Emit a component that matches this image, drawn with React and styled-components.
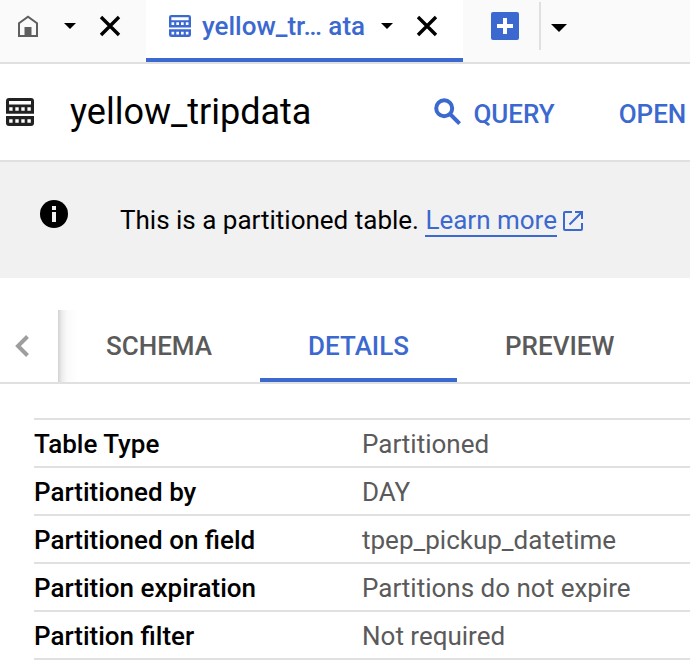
import React from "react";
import styled, { createGlobalStyle } from "styled-components";

const BLUE = "#3b69d0";
const LINE = "#e0e0e0";
const GREY = "#5a5a5a";

const GlobalStyle = createGlobalStyle`
  *, *::before, *::after { box-sizing: border-box; }
  body {
    margin: 0;
    background: #fff;
    color: #000;
    font: 400 26px/32px Roboto, "Noto Sans", sans-serif;
  }
`;

const Page = styled.div`
  overflow: hidden;
`;

const Button = styled.button`
  display: flex;
  align-items: center;
  flex: none;
  margin: 0;
  padding: 0;
  border: 0;
  background: none;
  color: inherit;
  font: inherit;
  white-space: nowrap;
  cursor: pointer;
`;

const Icon = styled.svg`
  display: block;
  flex: none;
`;

const EditorTabs = styled.nav`
  display: flex;
  height: 64px;
  background: #fafafa;
  border-bottom: 2px solid ${LINE};
`;

const EditorTab = styled.div`
  display: flex;
  align-items: center;
  flex: none;
  padding: ${(p) => (p.$active ? "0 25px 6px 23px" : "0 25px 6px 16px")};
  border-bottom: 4px solid ${(p) => (p.$active ? BLUE : "transparent")};
  background: ${(p) => (p.$active ? "#fff" : "transparent")};
`;

const TabLabel = styled(Button)`
  gap: 11px;
  color: ${BLUE};
  font-weight: 500;
`;

const MenuButton = styled(Button)`
  margin: 0 23px 0 ${(p) => (p.$wide ? "24px" : "16px")};
`;

const NewTab = styled.div`
  display: flex;
  align-items: center;
  flex: none;
  height: 48px;
  margin: 2px 10px 0 28px;
  padding-right: 20px;
  border-right: 2px solid ${LINE};
`;

const TabList = styled(Button)`
  height: 56px;
`;

const Header = styled.header`
  display: flex;
  align-items: center;
  height: 98px;
  padding-left: 6px;
  border-bottom: 2px solid ${LINE};
  color: #222;
`;

const Title = styled.h1`
  flex: none;
  margin: 0 123px 0 36px;
  color: #000;
  font-size: 36px;
  font-weight: 400;
  line-height: 44px;
`;

const Actions = styled.div`
  display: flex;
  gap: 64px;
  padding-top: 4px;
`;

const Action = styled(Button)`
  gap: 11px;
  color: ${BLUE};
  font-weight: 500;
`;

const Banner = styled.section`
  display: flex;
  align-items: flex-start;
  gap: 52px;
  padding: 38px 40px 36px;
  background: #f1f1f1;
`;

const BannerText = styled.p`
  margin: 4px 0 5px;
`;

const LearnMore = styled.a`
  display: inline-flex;
  align-items: center;
  gap: 6px;
  height: 32px;
  color: ${BLUE};
  text-decoration: none;

  span {
    height: 33px;
    border-bottom: 2px solid ${BLUE};
  }
`;

const DetailTabs = styled.div`
  display: flex;
  height: 74px;
  margin-top: 32px;
  border-bottom: 2px solid ${LINE};
`;

const ScrollBack = styled(Button)`
  justify-content: center;
  width: 58px;
  padding-right: 14px;
  color: #9e9e9e;
`;

const TabStrip = styled.div`
  display: flex;
  flex: 1;
  min-width: 0;
  background: linear-gradient(to right, #d2d2d2 0, #ededed 4px, #fafafa 9px, #fff 20px);
`;

const DetailTab = styled(Button)`
  padding: 4px 48px 0;
  border-bottom: 4px solid ${(p) => (p.$active ? BLUE : "transparent")};
  color: ${(p) => (p.$active ? BLUE : GREY)};
  font-weight: 500;
`;

const Properties = styled.table`
  width: calc(100% - 34px);
  margin: 34px 0 4px 34px;
  border-collapse: separate;
  border-spacing: 0;
  border-top: 2px solid ${LINE};
`;

const PropertyName = styled.th`
  width: 328px;
  height: 48px;
  padding: 2px 0 0;
  border-bottom: 2px solid ${LINE};
  font-weight: 500;
  text-align: left;
  white-space: nowrap;
`;

const PropertyValue = styled.td`
  padding: 2px 0 0;
  border-bottom: 2px solid ${LINE};
  color: ${GREY};
  white-space: nowrap;
`;

const TableIcon = ({ size }) => (
  <Icon width={size} height={size} viewBox="0 0 28 28" fill="currentColor" fillRule="evenodd" aria-hidden="true">
    <path d="M3 0H25Q28 0 28 3V15.8H0V3Q0 0 3 0ZM3 3V6.6H25V3ZM3.2 9.3V12.7H6.6V9.3ZM9.3 9.3V12.7H12.7V9.3ZM15.3 9.3V12.7H18.7V9.3ZM21.4 9.3V12.7H24.8V9.3Z" />
    <path d="M0 18H28V25Q28 28 25 28H3Q0 28 0 25ZM3.2 21.3V24.7H6.6V21.3ZM9.3 21.3V24.7H12.7V21.3ZM15.3 21.3V24.7H18.7V21.3ZM21.4 21.3V24.7H24.8V21.3Z" />
  </Icon>
);

const HomeIcon = () => (
  <Icon width="24" height="24" viewBox="0 0 24 24" aria-hidden="true">
    <path d="M3 22V9.3L12 2.7L21 9.3V22Z" fill="none" stroke="#5f5f5f" strokeWidth="2" />
    <path d="M8.5 13H15.5V22H8.5Z" fill="#5f5f5f" />
  </Icon>
);

const Caret = ({ width, height }) => (
  <Icon width={width} height={height} viewBox="0 0 16 8" preserveAspectRatio="none" aria-hidden="true">
    <path d="M0 0H16L8 8Z" />
  </Icon>
);

const CloseIcon = () => (
  <Icon width="22" height="22" viewBox="0 0 22 22" aria-hidden="true">
    <path d="M2 2L20 20M20 2L2 20" stroke="#000" strokeWidth="3.4" />
  </Icon>
);

const PlusIcon = () => (
  <Icon width="28" height="28" viewBox="0 0 28 28" aria-hidden="true">
    <rect width="28" height="28" rx="2" fill={BLUE} />
    <path d="M14 6V22M6 14H22" stroke="#fff" strokeWidth="4" />
  </Icon>
);

const SearchIcon = () => (
  <Icon width="28" height="32" viewBox="0 0 28 32" fill="none" stroke="currentColor" strokeWidth="4" aria-hidden="true">
    <circle cx="10.2" cy="10.2" r="8" />
    <path d="M15.5 15.5L25.6 25.6" />
  </Icon>
);

const InfoIcon = () => (
  <Icon width="28" height="28" viewBox="0 0 28 28" aria-hidden="true">
    <circle cx="14" cy="14" r="14" />
    <path d="M12 6H16V10H12ZM12 12H16V22H12Z" fill="#f1f1f1" />
  </Icon>
);

const ExternalIcon = () => (
  <Icon width="20" height="20" viewBox="0 0 20 20" fill="none" stroke="currentColor" strokeWidth="2" aria-hidden="true">
    <path d="M9 1H2Q1 1 1 2V18Q1 19 2 19H18Q19 19 19 18V12" />
    <path d="M12 1H19V8M18.5 1.5L6.5 13.5" />
  </Icon>
);

const ChevronIcon = () => (
  <Icon width="16" height="24" viewBox="0 0 16 24" fill="none" stroke="currentColor" strokeWidth="4" aria-hidden="true">
    <path d="M13.5 2.5L4 12L13.5 21.5" />
  </Icon>
);

const properties = [
  ["Table Type", "Partitioned"],
  ["Partitioned by", "DAY"],
  ["Partitioned on field", "tpep_pickup_datetime"],
  ["Partition expiration", "Partitions do not expire"],
  ["Partition filter", "Not required"],
];

const detailTabs = ["SCHEMA", "DETAILS", "PREVIEW"];

export default function App() {
  return (
    <Page>
      <GlobalStyle />
      <EditorTabs aria-label="Editor tabs">
        <EditorTab>
          <Button aria-label="Home"><HomeIcon /></Button>
          <MenuButton $wide aria-label="Home tab menu"><Caret width={12} height={6} /></MenuButton>
          <Button aria-label="Close home tab"><CloseIcon /></Button>
        </EditorTab>
        <EditorTab $active>
          <TabLabel><TableIcon size={22} />yellow_tr… ata</TabLabel>
          <MenuButton aria-label="Table tab menu"><Caret width={12} height={6} /></MenuButton>
          <Button aria-label="Close table tab"><CloseIcon /></Button>
        </EditorTab>
        <NewTab>
          <Button aria-label="New tab"><PlusIcon /></Button>
        </NewTab>
        <TabList aria-label="All tabs"><Caret width={16} height={8} /></TabList>
      </EditorTabs>

      <Header>
        <TableIcon size={28} />
        <Title>yellow_tripdata</Title>
        <Actions>
          <Action><SearchIcon />QUERY</Action>
          <Action>OPEN</Action>
        </Actions>
      </Header>

      <Banner>
        <InfoIcon />
        <BannerText>
          This is a partitioned table.{" "}
          <LearnMore href="#learn-more"><span>Learn more</span><ExternalIcon /></LearnMore>
        </BannerText>
      </Banner>

      <DetailTabs>
        <ScrollBack aria-label="Previous tabs"><ChevronIcon /></ScrollBack>
        <TabStrip role="tablist">
          {detailTabs.map((name) => (
            <DetailTab key={name} role="tab" $active={name === "DETAILS"} aria-selected={name === "DETAILS"}>
              {name}
            </DetailTab>
          ))}
        </TabStrip>
      </DetailTabs>

      <Properties>
        <tbody>
          {properties.map(([name, value]) => (
            <tr key={name}>
              <PropertyName scope="row">{name}</PropertyName>
              <PropertyValue>{value}</PropertyValue>
            </tr>
          ))}
        </tbody>
      </Properties>
    </Page>
  );
}
